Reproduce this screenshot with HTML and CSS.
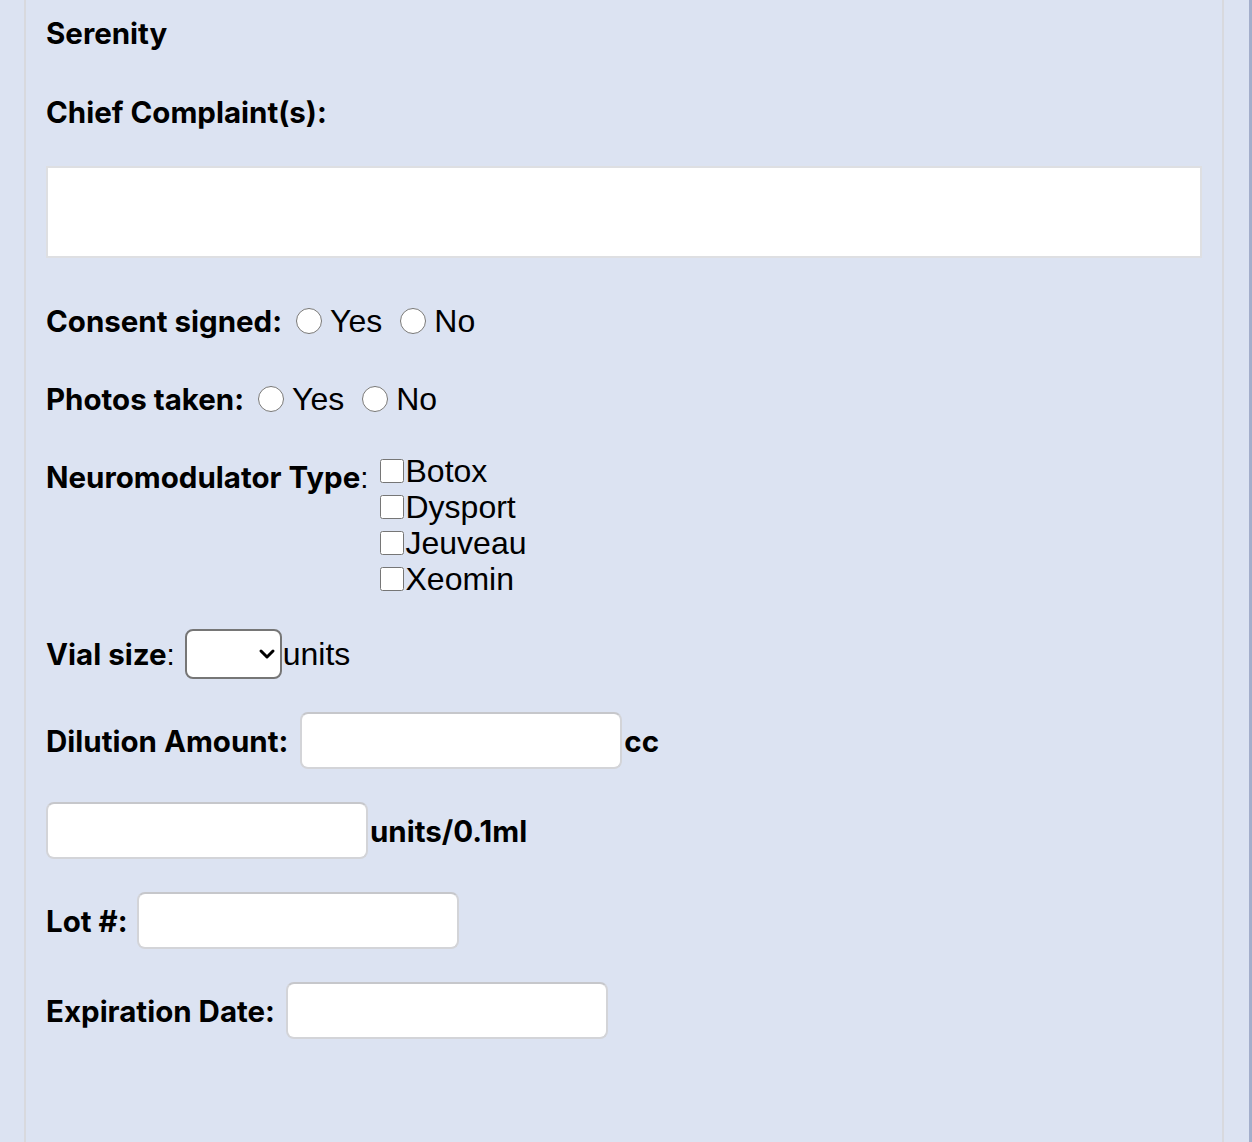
FILE: index.html
```html
<!DOCTYPE html>
<html lang="en">
<head>
  <meta charset="UTF-8">
  <title>Serenity - Neuromodulator</title>
  <meta name="viewport" content="width=device-width, initial-scale=1">
  <link rel="stylesheet" href="styles.css">
</head>
<body>
  <div class="panel">
    <div class="title">Serenity</div>

    <div class="field-label complaint-label">Chief Complaint(s):</div>
    <textarea class="complaint"></textarea>

    <div class="row radio-row">
      <span class="label">Consent signed:</span>
      <label class="opt"><input type="radio" name="consent"> Yes</label>
      <label class="opt"><input type="radio" name="consent"> No</label>
    </div>

    <div class="row radio-row">
      <span class="label">Photos taken:</span>
      <label class="opt"><input type="radio" name="photos"> Yes</label>
      <label class="opt"><input type="radio" name="photos"> No</label>
    </div>

    <div class="row type-row">
      <span class="label">Neuromodulator Type<span class="colon">:</span></span>
      <div class="check-list">
        <label class="check"><input type="checkbox">Botox</label>
        <label class="check"><input type="checkbox">Dysport</label>
        <label class="check"><input type="checkbox">Jeuveau</label>
        <label class="check"><input type="checkbox">Xeomin</label>
      </div>
    </div>

    <div class="row vial-row">
      <span class="label">Vial size<span class="colon">:</span></span>
      <div class="select-wrap">
        <select class="vial">
          <option></option>
          <option>50</option>
          <option>100</option>
          <option>200</option>
        </select>
        <svg class="chevron" width="18" height="12" viewBox="0 0 18 12"><path d="M3 3 L9 9 L15 3" fill="none" stroke="#000" stroke-width="3" stroke-linecap="round" stroke-linejoin="round"/></svg>
      </div>
      <span class="plain">units</span>
    </div>

    <div class="row input-row dilution-row">
      <span class="label">Dilution Amount:</span>
      <input type="text" class="box">
      <span class="unit">cc</span>
    </div>

    <div class="row input-row">
      <input type="text" class="box">
      <span class="unit">units/0.1ml</span>
    </div>

    <div class="row input-row">
      <span class="label lot-label">Lot #:</span>
      <input type="text" class="box">
    </div>

    <div class="row input-row">
      <span class="label exp-label">Expiration Date:</span>
      <input type="text" class="box">
    </div>
  </div>
</body>
</html>
```

FILE: styles.css
```css
* { box-sizing: border-box; margin: 0; padding: 0; }
html, body { height: 100%; }
body {
  background: #dce3f2;
  border-right: 3px solid #a3aecb;
  padding-left: 24px;
  font-family: 'Inter', 'Liberation Sans', Arial, sans-serif;
  color: #000;
}
.panel {
  width: 1200px;
  min-height: 100%;
  border-left: 2px solid #d8d9de;
  border-right: 2px solid #d8d9de;
  padding: 15px 20px 40px 20px;
}
.title, .label, .field-label, .unit {
  font-family: 'Inter', sans-serif;
  font-weight: 700;
  font-size: 29.5px;
  line-height: 36px;
}
.complaint-label { margin-top: 43px; }
.complaint {
  display: block;
  width: 1156px;
  height: 92px;
  margin-top: 36px;
  border: 2px solid #dedfe2;
  background: #fff;
  resize: none;
  outline: none;
}
.row {
  display: flex;
  align-items: center;
}
.radio-row { height: 36px; margin-top: 45px; }
.radio-row + .radio-row { margin-top: 42px; }
.opt {
  display: flex;
  align-items: center;
  font-family: 'Liberation Sans', Arial, sans-serif;
  font-size: 32px;
  margin-left: 14px;
}
.opt + .opt { margin-left: 18px; }
.opt input {
  width: 26px;
  height: 26px;
  margin: 0 8px 0 0;
}
.type-row { align-items: flex-start; margin-top: 36px; }
.type-row .label { margin-top: 6px; }
.colon {
  font-family: 'Liberation Sans', Arial, sans-serif;
  font-weight: 400;
}
.check-list {
  display: flex;
  flex-direction: column;
  margin-left: 10px;
}
.check {
  display: flex;
  align-items: center;
  height: 36px;
  font-family: 'Liberation Sans', Arial, sans-serif;
  font-size: 32px;
}
.check input {
  width: 26px;
  height: 24px;
  margin: 0 1px 0 0;
}
.vial-row { margin-top: 32px; height: 50px; }
.select-wrap {
  position: relative;
  margin-left: 10px;
}
.vial {
  appearance: none;
  -webkit-appearance: none;
  display: block;
  width: 97px;
  height: 50px;
  border: 2px solid #767676;
  border-radius: 8px;
  background: #fff;
  font-size: 24px;
  padding-left: 8px;
}
.chevron {
  position: absolute;
  right: 6px;
  top: 19px;
  pointer-events: none;
}
.plain {
  font-family: 'Liberation Sans', Arial, sans-serif;
  font-size: 32px;
  margin-left: 1px;
}
.input-row { margin-top: 33px; height: 57px; }
.box {
  width: 322px;
  height: 57px;
  border: 2px solid #d3d4d8;
  border-top-color: #c6c7cb;
  border-radius: 8px;
  background: #fff;
  outline: none;
}
.label + .box { margin-left: 12px; }
.unit { margin-left: 2px; }
.lot-label + .box { margin-left: 9px; }
.exp-label + .box { margin-left: 11px; }
```
